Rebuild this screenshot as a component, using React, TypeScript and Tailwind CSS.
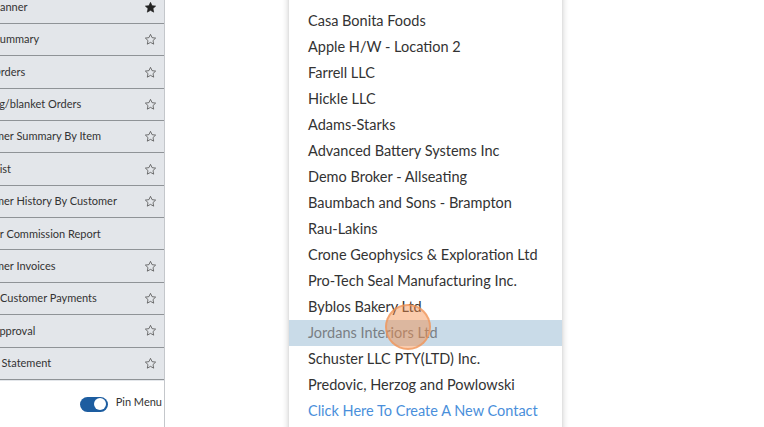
import React from "react";

const rows: { t: string; ml: number; star: "filled" | "outline" | "none" }[] = [
  { t: "anner", ml: 0, star: "filled" },
  { t: "Summary", ml: -6, star: "outline" },
  { t: "Orders", ml: -8, star: "outline" },
  { t: "ng/blanket Orders", ml: -7, star: "outline" },
  { t: "mer Summary By Item", ml: -5, star: "outline" },
  { t: "List", ml: -6, star: "outline" },
  { t: "mer History By Customer", ml: -5, star: "outline" },
  { t: "er Commission Report", ml: -6, star: "none" },
  { t: "mer Invoices", ml: -5, star: "outline" },
  { t: "Customer Payments", ml: 0, star: "outline" },
  { t: "Approval", ml: -8, star: "outline" },
  { t: "r Statement", ml: -5, star: "outline" },
];

const items = [
  "Casa Bonita Foods",
  "Apple H/W - Location 2",
  "Farrell LLC",
  "Hickle LLC",
  "Adams-Starks",
  "Advanced Battery Systems Inc",
  "Demo Broker - Allseating",
  "Baumbach and Sons - Brampton",
  "Rau-Lakins",
  "Crone Geophysics & Exploration Ltd",
  "Pro-Tech Seal Manufacturing Inc.",
  "Byblos Bakery Ltd",
  "Jordans Interiors Ltd",
  "Schuster LLC PTY(LTD) Inc.",
  "Predovic, Herzog and Powlowski",
];

function Star({ filled }: { filled: boolean }) {
  return (
    <svg width="13" height="13" viewBox="0 0 24 24" className="shrink-0">
      <path
        d="M12 2.5l2.9 6.1 6.6.8-4.9 4.6 1.3 6.6L12 17.3l-5.9 3.3 1.3-6.6-4.9-4.6 6.6-.8z"
        fill={filled ? "#222" : "none"}
        stroke={filled ? "#222" : "#555"}
        strokeWidth={filled ? 1.2 : 1.5}
        strokeLinejoin="round"
      />
    </svg>
  );
}

export default function App() {
  return (
    <div
      className="relative w-[764px] h-[427px] overflow-hidden bg-white flex"
      style={{ fontFamily: "Lato, 'Noto Sans', sans-serif" }}
    >
      <div className="w-[165px] h-full flex flex-col border-r border-[#c4c7cb] bg-white">
        <div className="flex-1 overflow-hidden bg-[#e3e6ea]">
          <div className="mt-[-8.4px] flex flex-col">
            {rows.map((r, i) => (
              <div
                key={i}
                className="h-[32.36px] shrink-0 flex items-center justify-between border-b border-[#8f9397] pr-[7px] overflow-hidden"
              >
                <span
                  className="text-[11px] text-[#333] whitespace-nowrap"
                  style={{ marginLeft: r.ml }}
                >
                  {r.t}
                </span>
                {r.star === "none" ? (
                  <span className="w-[13px]" />
                ) : (
                  <Star filled={r.star === "filled"} />
                )}
              </div>
            ))}
          </div>
        </div>
        <div className="h-[46px] shrink-0 flex items-center justify-end pr-[2px] gap-[8px] bg-white">
          <div className="w-[28px] h-[15px] rounded-full bg-[#1d5da0] flex items-center justify-end pr-[2px]">
            <div className="w-[12px] h-[12px] rounded-full bg-white" />
          </div>
          <span className="text-[11px] text-[#333] mb-[3px]">Pin Menu</span>
        </div>
      </div>

      <div className="absolute left-[288px] top-[-18px] w-[275px] bg-white shadow-[0_0_6px_rgba(0,0,0,0.18)] border-x border-[#e2e2e2] pb-[10px]">
        <div className="h-[26px]" />
        {items.map((it) => (
          <div
            key={it}
            className={`h-[26px] flex items-center pl-[19px] text-[14.5px] whitespace-nowrap ${
              it === "Jordans Interiors Ltd" ? "bg-[#c9dbe8] text-[#7a7f84]" : "text-[#333]"
            }`}
          >
            {it}
          </div>
        ))}
        <div className="h-[26px] flex items-center pl-[19px] text-[14.5px] text-[#4a8fdb] whitespace-nowrap">
          Click Here To Create A New Contact
        </div>
      </div>

      <div className="absolute left-[385px] top-[304px] w-[46px] h-[46px] rounded-full bg-[rgba(245,140,70,0.45)] border-2 border-[rgba(240,150,90,0.7)]" />
    </div>
  );
}
